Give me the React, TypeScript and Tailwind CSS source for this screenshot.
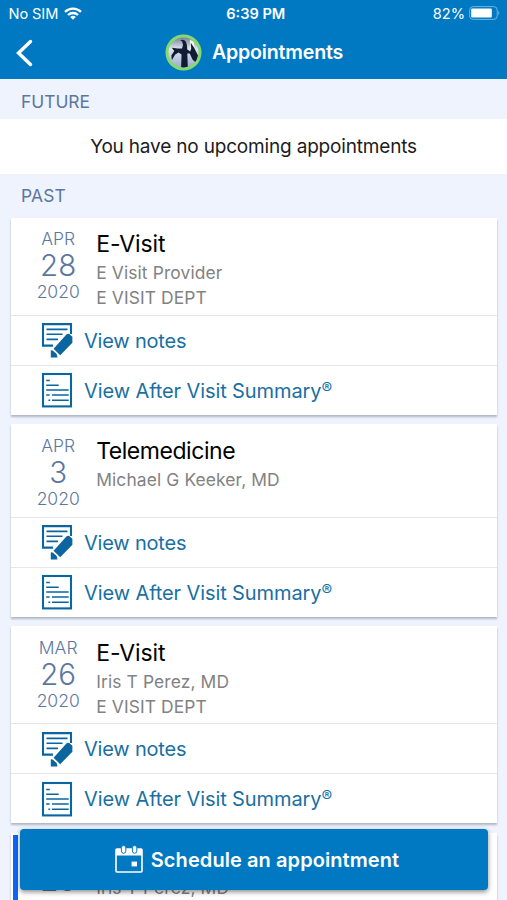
import React from "react";

type Visit = {
  month: string;
  day: string;
  title: string;
  titleClass: string;
  lines: string[];
};

const visits: Visit[] = [
  {
    month: "APR",
    day: "28",
    title: "E-Visit",
    titleClass: "tracking-[-0.1px]",
    lines: ["E Visit Provider", "E VISIT DEPT"],
  },
  {
    month: "APR",
    day: "3",
    title: "Telemedicine",
    titleClass: "tracking-[-0.45px]",
    lines: ["Michael G Keeker, MD"],
  },
  {
    month: "MAR",
    day: "26",
    title: "E-Visit",
    titleClass: "tracking-[-0.1px]",
    lines: ["Iris T Perez, MD", "E VISIT DEPT"],
  },
];

function NotesIcon() {
  return (
    <svg className="h-[36px] w-[32px] shrink-0" viewBox="0 0 32 36" fill="none" stroke="#0b66a0">
      <path d="M30 12V2.1H2V23.6h10" strokeWidth="2.1" />
      <path d="M5.5 7.4h21M5.5 12.3h16M5.5 17.4h11.5" strokeWidth="1.6" />
      <path d="M12.6 26.8 25.4 12.6Q27 11 28.6 12.2L31.4 14.8V20.8L19.2 33.2Z" fill="#0b66a0" stroke="none" />
      <path d="M9.8 28.4Q12 28 13.6 30.2 16.4 31.6 16.4 35.4H9.8Z" fill="#0b66a0" stroke="none" />
    </svg>
  );
}

function SummaryIcon() {
  return (
    <svg className="h-[36px] w-[32px] shrink-0" viewBox="0 0 32 36" fill="none" stroke="#0b66a0">
      <rect x="2" y="2" width="28" height="32.4" strokeWidth="2.1" />
      <path
        d="M5.2 8.5h3.6M5.2 13.2h12.5M5.2 18h22.5M5.2 22.9h3.4M11 22.9h16.7M7.4 28.2h1.8M11 28.2h16.7"
        strokeWidth="1.5"
      />
    </svg>
  );
}

function LinkRow({ icon, children }: { icon: React.ReactNode; children: React.ReactNode }) {
  return (
    <div className="flex h-[50px] items-center gap-[11.5px] border-t border-[#e5e6e8] pl-[30px] text-[20px] text-[#1a6fa3]">
      {icon}
      {children}
    </div>
  );
}

function DateColumn({ month, day }: { month: string; day: string }) {
  return (
    <div className="flex w-[64px] flex-col items-center text-[#5b779f]">
      <span className="text-[17.5px] leading-[21px] font-light">{month}</span>
      <span className="text-[29.5px] leading-[32px] font-light">{day}</span>
      <span className="text-[17.5px] leading-[21px] font-light">2020</span>
    </div>
  );
}

function VisitCard({ visit }: { visit: Visit }) {
  const height = visit.lines.length > 1 ? "h-[97.3px]" : "h-[92.4px]";
  return (
    <section className="bg-white shadow-[0_1.5px_2px_rgba(60,70,90,0.35)]">
      <div className={`flex pt-[10.6px] pl-[15.7px] ${height}`}>
        <DateColumn month={visit.month} day={visit.day} />
        <div className="ml-[6px] flex flex-col">
          <h2 className={`text-[23px] leading-[32px] text-black ${visit.titleClass}`}>{visit.title}</h2>
          {visit.lines.map((line) => (
            <p key={line} className="text-[17.4px] leading-[25px] tracking-[0.12px] text-[#828282]">
              {line}
            </p>
          ))}
        </div>
      </div>
      <LinkRow icon={<NotesIcon />}>
        <span className="pt-[1px] tracking-[-0.2px]">View notes</span>
      </LinkRow>
      <LinkRow icon={<SummaryIcon />}>
        <span className="pt-[1px] tracking-[-0.1px]">
          View After Visit Summary<span className="relative -top-[4px] text-[16px] leading-none">®</span>
        </span>
      </LinkRow>
    </section>
  );
}

function Avatar() {
  return (
    <svg className="h-[37px] w-[37px]" viewBox="0 0 38 38">
      <defs>
        <clipPath id="avatar-clip">
          <circle cx="19" cy="19" r="15.4" />
        </clipPath>
        <linearGradient id="avatar-sky" x1="0" y1="0" x2="0" y2="1">
          <stop offset="0" stopColor="#56647e" />
          <stop offset="0.4" stopColor="#dfe5f0" />
          <stop offset="1" stopColor="#8fa3c4" />
        </linearGradient>
      </defs>
      <circle cx="19" cy="19" r="18.5" fill="#86d970" />
      <g clipPath="url(#avatar-clip)">
        <rect width="38" height="38" fill="url(#avatar-sky)" />
        <path d="M25.5 6l4 2 1 6-4 2z" fill="#f4f6e4" />
        <path
          d="M15.5 6.5q4-1.5 6 1.5 1.4 3 1.4 8l3 2 1-3-.4-6 3.4 5 4 8-1.5 8-4-3.5-3-6.5-2.5 0 .6 16h-7l.5-15-3-2-3.5 2-3.5 6-.5-5 3-4.500-2.500-3.500 6 1 4.500 0 1-4-1-3.500z"
          fill="#101c33"
        />
      </g>
    </svg>
  );
}

function CalendarIcon() {
  return (
    <svg className="-mt-[2px] h-[28px] w-[28px]" viewBox="0 0 28 28" fill="none">
      <rect x="1" y="4" width="26" height="23" rx="1" stroke="#fff" strokeWidth="1.6" />
      <path d="M1 4h26v6.5H1z" fill="#fff" />
      <rect x="6.4" y="0.6" width="4.4" height="7.6" rx="2" fill="#fff" stroke="#0079c2" strokeWidth="1" />
      <rect x="17.4" y="0.6" width="4.4" height="7.6" rx="2" fill="#fff" stroke="#0079c2" strokeWidth="1" />
      <rect x="16.6" y="16.6" width="5.4" height="4.8" fill="#fff" />
    </svg>
  );
}

function StatusBar() {
  return (
    <div className="grid h-[28px] grid-cols-3 items-center pr-[7px] pl-[8.5px] text-[14.6px]">
      <div className="flex items-center gap-[6px]">
        <span className="pt-[1px] tracking-[-0.1px]">No SIM</span>
        <svg className="-mt-[1px] h-[13px] w-[18px]" viewBox="0 0 18 13" fill="none" stroke="#fff" strokeWidth="2.3">
          <path d="M1 4.800a11.500 11.500 0 0 1 16 0M4 8a7.200 7.200 0 0 1 10 0" />
          <path d="M9 12.800 6.200 10a4 4 0 0 1 5.600 0z" fill="#fff" stroke="none" />
        </svg>
      </div>
      <span className="pt-[1px] pl-[3px] text-center font-semibold">6:39 PM</span>
      <div className="flex items-center justify-end gap-[4px]">
        <span className="pt-[1px]">82%</span>
        <svg className="-mt-[1px] h-[14px] w-[31px]" viewBox="0 0 31 14">
          <rect x="0.6" y="0.6" width="27.6" height="12.8" rx="3.5" fill="none" stroke="#6bb4e0" strokeWidth="1" />
          <rect x="2.2" y="2.4" width="20.6" height="9.2" rx="1" fill="#fff" />
          <path d="M29.4 4.5q2 2.5 0 5z" fill="#6bb4e0" />
        </svg>
      </div>
    </div>
  );
}

export default function App() {
  return (
    <div className="relative h-[900px] w-[507px] overflow-hidden bg-[#eef3fd] font-['Inter','Liberation_Sans',sans-serif]">
      <header className="h-[79px] bg-[#0079c2] text-white">
        <StatusBar />
        <div className="grid h-[49px] grid-cols-[60px_1fr_60px] items-center">
          <svg className="ml-[15px] h-[28px] w-[18px]" viewBox="0 0 18 28" fill="none" stroke="#fff" strokeWidth="3.4">
            <path d="M15.5 2.5 3.5 14l12 11.5" strokeLinecap="round" />
          </svg>
          <div className="flex items-center justify-center gap-[10px] pl-[1px]">
            <Avatar />
            <h1 className="pt-[1px] text-[19.6px] font-semibold tracking-[-0.18px]">Appointments</h1>
          </div>
        </div>
      </header>

      <h3 className="h-[40px] pl-[21px] text-[17.4px] leading-[45px] text-[#5b779f]">FUTURE</h3>
      <p className="h-[55px] bg-white text-center text-[19px] leading-[56px] tracking-[-0.18px] text-[#1c1c1c]">
        You have no upcoming appointments
      </p>
      <h3 className="h-[43.7px] pl-[21px] text-[17.4px] leading-[43.5px] tracking-[0.2px] text-[#5b779f]">PAST</h3>

      <main className="flex flex-col gap-[9.3px] px-[10.5px]">
        {visits.map((v) => (
          <VisitCard key={v.month + v.day} visit={v} />
        ))}
        <section className="flex h-[200px] bg-white pt-[10.6px] pl-[15.7px] shadow-[0_1.5px_2px_rgba(60,70,90,0.35)]">
          <div className="-mt-[8px] mr-[8px] -ml-[13px] w-[5px] shrink-0 bg-[#0a66f5]" />
          <DateColumn month="MAR" day="26" />
          <div className="ml-[6px]">
            <h2 className="text-[23px] leading-[32px] tracking-[-0.1px]">E-Visit</h2>
            <p className="text-[17.4px] leading-[25px] tracking-[0.12px] text-[#828282]">Iris T Perez, MD</p>
          </div>
        </section>
      </main>

      <button className="absolute top-[829px] left-[20px] flex h-[61px] w-[468px] items-center justify-center gap-[8px] rounded-[4px] bg-[#0079c2] pl-[6px] text-[20px] font-semibold text-white shadow-[0_2px_5px_rgba(0,0,0,0.45)]">
        <CalendarIcon />
        <span className="tracking-[0.08px]">Schedule an appointment</span>
      </button>
    </div>
  );
}
